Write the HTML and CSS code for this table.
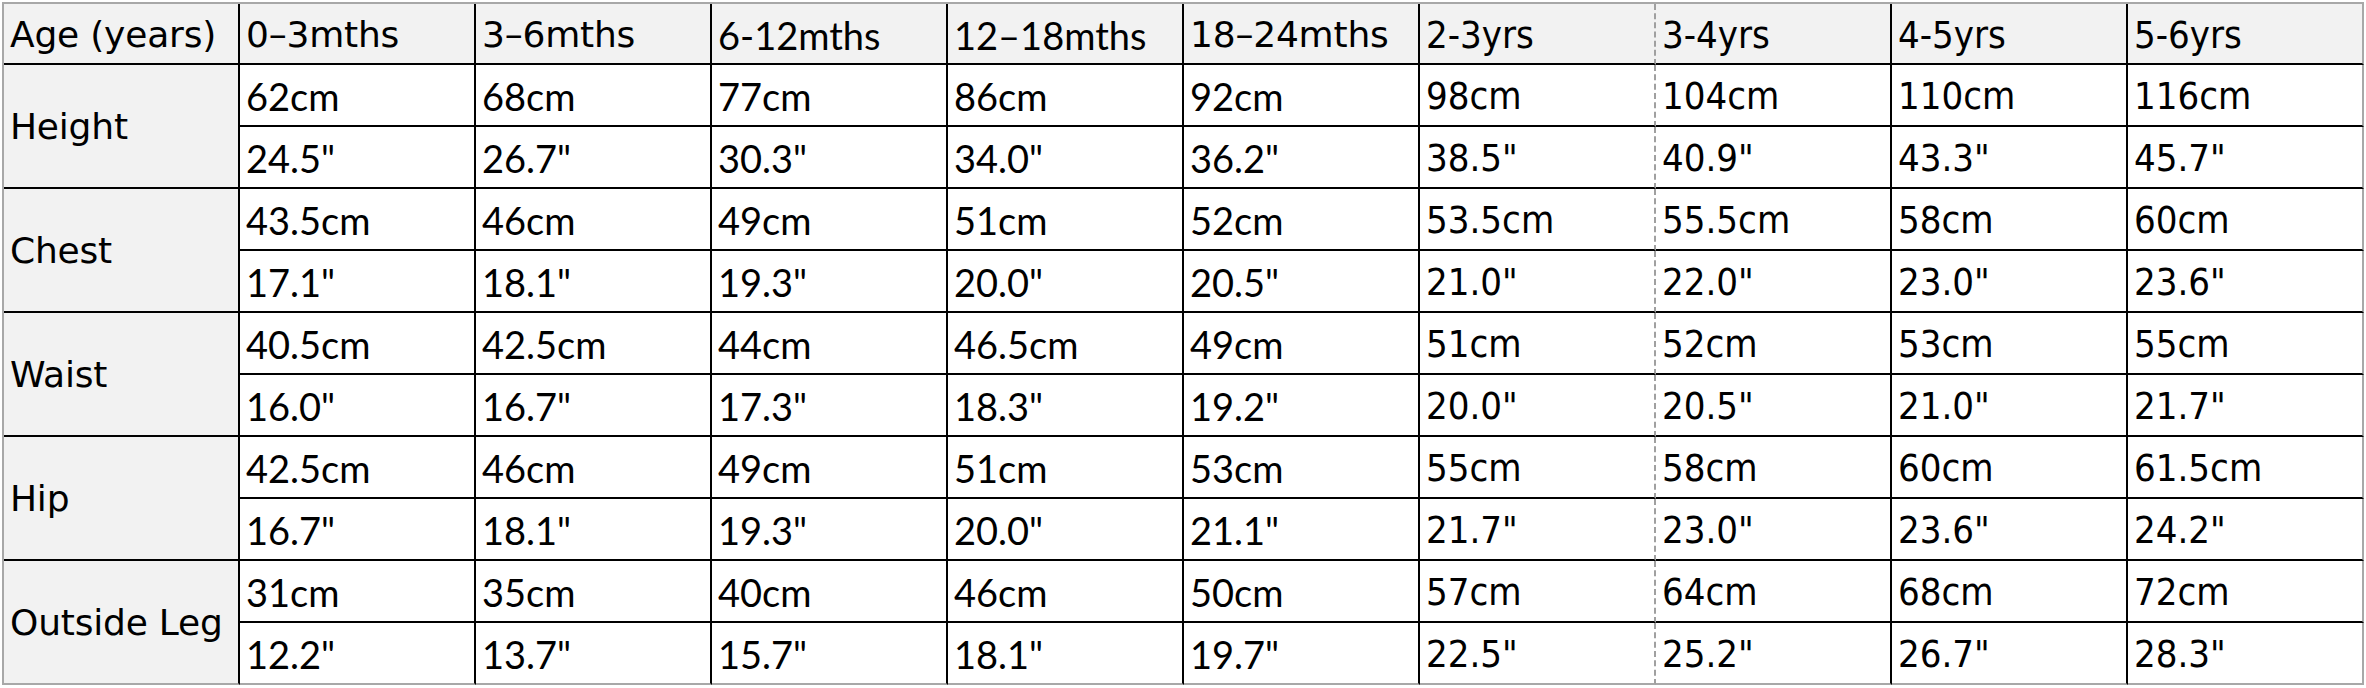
FILE: index.html
```html
<!DOCTYPE html>
<html>
<head>
<meta charset="utf-8">
<link rel="stylesheet" href="styles.css">
</head>
<body>
<table class="size-chart">
  <tr class="head-row">
    <th class="label g">Age (years)</th>
    <th class="g">0–3mths</th>
    <th class="g">3–6mths</th>
    <th class="c">6-12mths</th>
    <th class="c">12–18mths</th>
    <th class="g">18–24mths</th>
    <th class="n pre">2-3yrs</th>
    <th class="n post">3-4yrs</th>
    <th class="n">4-5yrs</th>
    <th class="n last">5-6yrs</th>
  </tr>

  <tr class="row">
    <td class="label g" rowspan="2">Height</td>
    <td>62cm</td><td>68cm</td><td>77cm</td><td>86cm</td><td>92cm</td>
    <td class="n pre">98cm</td><td class="n post">104cm</td><td class="n">110cm</td><td class="n last">116cm</td>
  </tr>
  <tr class="row">
    <td>24.5"</td><td>26.7"</td><td>30.3"</td><td>34.0"</td><td>36.2"</td>
    <td class="n pre">38.5"</td><td class="n post">40.9"</td><td class="n">43.3"</td><td class="n last">45.7"</td>
  </tr>

  <tr class="row">
    <td class="label g" rowspan="2">Chest</td>
    <td>43.5cm</td><td>46cm</td><td>49cm</td><td>51cm</td><td>52cm</td>
    <td class="n pre">53.5cm</td><td class="n post">55.5cm</td><td class="n">58cm</td><td class="n last">60cm</td>
  </tr>
  <tr class="row">
    <td>17.1"</td><td>18.1"</td><td>19.3"</td><td>20.0"</td><td>20.5"</td>
    <td class="n pre">21.0"</td><td class="n post">22.0"</td><td class="n">23.0"</td><td class="n last">23.6"</td>
  </tr>

  <tr class="row">
    <td class="label g" rowspan="2">Waist</td>
    <td>40.5cm</td><td>42.5cm</td><td>44cm</td><td>46.5cm</td><td>49cm</td>
    <td class="n pre">51cm</td><td class="n post">52cm</td><td class="n">53cm</td><td class="n last">55cm</td>
  </tr>
  <tr class="row">
    <td>16.0"</td><td>16.7"</td><td>17.3"</td><td>18.3"</td><td>19.2"</td>
    <td class="n pre">20.0"</td><td class="n post">20.5"</td><td class="n">21.0"</td><td class="n last">21.7"</td>
  </tr>

  <tr class="row">
    <td class="label g" rowspan="2">Hip</td>
    <td>42.5cm</td><td>46cm</td><td>49cm</td><td>51cm</td><td>53cm</td>
    <td class="n pre">55cm</td><td class="n post">58cm</td><td class="n">60cm</td><td class="n last">61.5cm</td>
  </tr>
  <tr class="row">
    <td>16.7"</td><td>18.1"</td><td>19.3"</td><td>20.0"</td><td>21.1"</td>
    <td class="n pre">21.7"</td><td class="n post">23.0"</td><td class="n">23.6"</td><td class="n last">24.2"</td>
  </tr>

  <tr class="row">
    <td class="label g bottom" rowspan="2">Outside Leg</td>
    <td>31cm</td><td>35cm</td><td>40cm</td><td>46cm</td><td>50cm</td>
    <td class="n pre">57cm</td><td class="n post">64cm</td><td class="n">68cm</td><td class="n last">72cm</td>
  </tr>
  <tr class="row final">
    <td>12.2"</td><td>13.7"</td><td>15.7"</td><td>18.1"</td><td>19.7"</td>
    <td class="n pre">22.5"</td><td class="n post">25.2"</td><td class="n">26.7"</td><td class="n last">28.3"</td>
  </tr>
</table>
</body>
</html>
```

FILE: styles.css
```css
html, body {
  margin: 0;
  padding: 0;
  background: #ffffff;
}

.size-chart {
  margin: 2px 0 0 2px;
  width: 2362px;
  table-layout: fixed;
  border-collapse: separate;
  border-spacing: 0;
  border-top: 2px solid #a8a8a8;
  border-left: 2px solid #a8a8a8;
  color: #000;
}

.size-chart th,
.size-chart td {
  box-sizing: border-box;
  padding: 2px 0 0 6px;
  text-align: left;
  vertical-align: middle;
  white-space: nowrap;
  overflow: hidden;
  font-weight: normal;
  font-family: "Lato", "Liberation Sans", sans-serif;
  font-size: 38px;
  line-height: 1;
  border-right: 2px solid #000;
  border-bottom: 2px solid #000;
  background: #ffffff;
}

.size-chart .head-row th {
  background: #f2f2f2;
  height: 61px;
}

.size-chart .row td {
  height: 62px;
}

.size-chart .label {
  background: #f2f2f2;
  font-size: 36px;
}

.size-chart .g {
  font-family: "DejaVu Sans", "Liberation Sans", sans-serif;
  letter-spacing: -0.2px;
}

.size-chart th.g {
  font-size: 36px;
}

.size-chart .c {
  font-family: "Lato", "Liberation Sans", sans-serif;
}

.size-chart .n {
  font-family: "DejaVu Sans Condensed", "DejaVu Sans", sans-serif;
  font-stretch: semi-condensed;
  font-size: 38px;
}

.size-chart .pre {
  border-right: 2px dashed #a0a0a0;
}

.size-chart .last {
  border-right: 2px solid #a8a8a8;
}

.size-chart .final td,
.size-chart .label.bottom {
  border-bottom: 2px solid #a8a8a8;
}
```
